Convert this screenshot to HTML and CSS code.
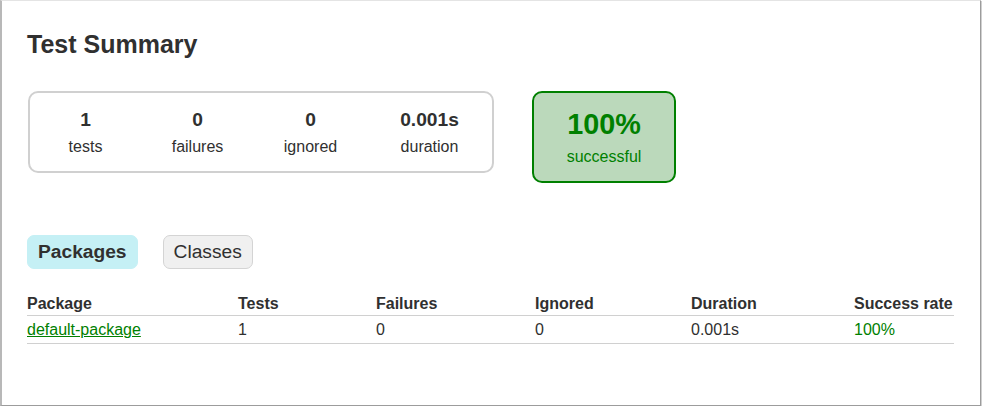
FILE: index.html
```html
<!DOCTYPE html>
<html>
<head>
<meta charset="utf-8">
<link rel="stylesheet" href="styles.css">
</head>
<body>
<div class="window">
  <h1 class="title">Test Summary</h1>
  <div class="summary">
    <div class="summary-group">
      <div class="info-box col-a"><p class="counter">1</p><p class="label">tests</p></div>
      <div class="info-box col-b"><p class="counter">0</p><p class="label">failures</p></div>
      <div class="info-box col-b"><p class="counter">0</p><p class="label">ignored</p></div>
      <div class="info-box col-d"><p class="counter">0.001s</p><p class="label">duration</p></div>
    </div>
    <div class="success-rate">
      <p class="percent">100%</p>
      <p class="label">successful</p>
    </div>
  </div>
  <ul class="tab-links">
    <li class="tab selected"><span class="tab-title">Packages</span></li>
    <li class="tab"><span class="tab-label">Classes</span></li>
  </ul>
  <table class="results">
    <colgroup>
      <col class="c1"><col class="c2"><col class="c3"><col class="c4"><col class="c5"><col class="c6">
    </colgroup>
    <thead>
      <tr><th>Package</th><th>Tests</th><th>Failures</th><th>Ignored</th><th>Duration</th><th>Success rate</th></tr>
    </thead>
    <tbody>
      <tr><td><a class="pkg-link" href="#">default-package</a></td><td>1</td><td>0</td><td>0</td><td>0.001s</td><td class="ok">100%</td></tr>
    </tbody>
  </table>
</div>
</body>
</html>
```
FILE: styles.css
```css
html, body {
  margin: 0;
  padding: 0;
  background: #ffffff;
}
body {
  font-family: "Liberation Sans", Arial, sans-serif;
  font-size: 16px;
  color: #303030;
}
.window {
  box-sizing: border-box;
  width: 981px;
  height: 406px;
  border-top: 1px solid #e4e4e4;
  border-left: 2px solid #b8b8b8;
  border-right: 1px solid #9c9c9c;
  border-bottom: 1px solid #9c9c9c;
  box-shadow: 1px 1px 0 #d0d0d0;
  padding: 29px 27px 0 25px;
}
.title {
  margin: 0;
  font-size: 25px;
  font-weight: bold;
  line-height: 29px;
  color: #303030;
}
.summary {
  display: flex;
  align-items: flex-start;
  margin-top: 32px;
}
.summary-group {
  display: flex;
  width: 466px;
  box-sizing: border-box;
  border: 2px solid #d0d0d0;
  border-radius: 10px;
  margin-left: 1px;
}
.info-box {
  padding: 15px 0;
  text-align: center;
}
.col-a { width: 111px; }
.col-b { width: 113px; }
.col-d { width: 125px; }
.info-box p, .success-rate p {
  margin: 0;
}
.counter {
  font-size: 19.2px;
  font-weight: bold;
  line-height: 24px;
  margin-bottom: 6px !important;
}
.label {
  line-height: 18px;
}
.success-rate {
  width: 144px;
  box-sizing: border-box;
  margin-left: 38px;
  padding: 15px 0;
  text-align: center;
  background: #bbd9bb;
  border: 2px solid #008000;
  border-radius: 10px;
  color: #008000;
}
.percent {
  font-size: 28.8px;
  font-weight: bold;
  line-height: 32px;
  margin-bottom: 8px !important;
}
.tab-links {
  display: flex;
  list-style: none;
  margin: 52px 0 0 0;
  padding: 0;
}
.tab {
  padding: 5px 10px;
  margin-right: 25px;
  border: 1px solid #d4d4d4;
  border-radius: 7px;
  background: #f0f0f0;
  font-size: 19.2px;
  line-height: 22px;
}
.tab.selected {
  background: #c5f0f5;
  border-color: #c5f0f5;
}
.tab-title {
  font-weight: bold;
}
.results {
  width: 927px;
  border-collapse: collapse;
  margin-top: 26px;
  table-layout: fixed;
  border-bottom: 1px solid #d0d0d0;
}
.c1 { width: 211px; }
.c2 { width: 138px; }
.c3 { width: 159px; }
.c4 { width: 156px; }
.c5 { width: 163px; }
.c6 { width: 100px; }
.results th {
  text-align: left;
  font-weight: bold;
  white-space: nowrap;
  padding: 0 0 2px 0;
  line-height: 18px;
  border-bottom: 1px solid #d0d0d0;
}
.results td {
  padding: 5px 0 4px 0;
  line-height: 18px;
  white-space: nowrap;
}
.pkg-link {
  color: #008000;
  text-decoration: underline;
}
.ok {
  color: #008000;
}
```
